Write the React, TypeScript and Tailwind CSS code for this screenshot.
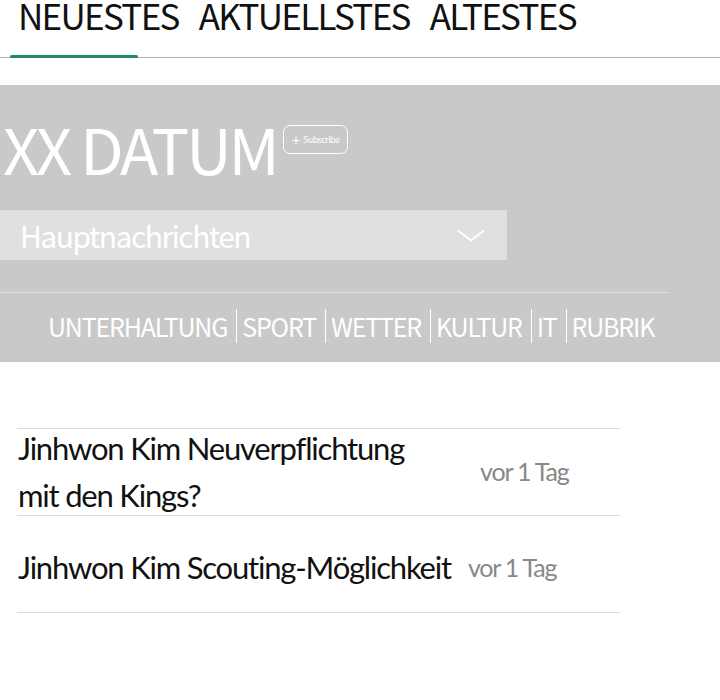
import React from 'react';

const tabs = ['NEUESTES', 'AKTUELLSTES', 'ALTESTES'];
const categories = ['UNTERHALTUNG', 'SPORT', 'WETTER', 'KULTUR', 'IT', 'RUBRIK'];

const articles = [
    { title: ['Jinhwon Kim Neuverpflichtung', 'mit den Kings?'], date: 'vor 1 Tag' },
    { title: ['Jinhwon Kim Scouting-Möglichkeit'], date: 'vor 1 Tag' },
];

const head = "font-['Noto_Sans_CJK_KR','Noto_Sans',sans-serif]";
const body = "font-['Lato','Noto_Sans',sans-serif]";

export default function App() {
    return (
        <div className="w-[720px] h-[700px] bg-white overflow-hidden">
            {/* Sort tabs */}
            <div className="relative h-[58px] border-b border-[#b5b5b5]">
                <div className={`flex gap-[20px] pl-[18px] text-[35px] leading-[30px] tracking-[-1.7px] text-[#111] ${head}`}>
                    {tabs.map((t) => (
                        <span key={t}>{t}</span>
                    ))}
                </div>
                <div className="absolute left-[10px] bottom-[-1px] w-[128px] h-[3px] rounded-full bg-[#1f8a68]" />
            </div>

            {/* Topic header */}
            <div className={`mt-[27px] h-[277px] bg-[#c9c9c9] pt-[28px] ${head}`}>
                <div className="flex items-start pl-[3px]">
                    <span className="text-[63px] leading-[70px] tracking-[-3px] text-white">XX DATUM</span>
                    <span className="mt-[12px] ml-[6px] flex items-center gap-[3px] h-[29px] px-[8px] rounded-[7px] border-[1.5px] border-white text-white">
                        <span className="text-[15px] leading-none">+</span>
                        <span className="text-[9px] tracking-[-0.6px]">Subscribe</span>
                    </span>
                </div>

                <div className="mt-[27px] flex items-center justify-between w-[507px] h-[50px] bg-[#e0e0e0] pl-[20px] pr-[22px]">
                    <span className="text-[30px] tracking-[-1.5px] text-white">Hauptnachrichten</span>
                    <svg width="28" height="13" viewBox="0 0 28 13" fill="none" stroke="white" strokeWidth="2">
                        <path d="M1 1.5l13 10L27 1.5" />
                    </svg>
                </div>

                <div className="mt-[32px] w-[670px] border-t border-[#dedede]" />

                <div className="flex items-center pl-[48px] mt-[16px] text-[25px] leading-[34px] tracking-[-1.2px] text-white">
                    {categories.map((c, i) => (
                        <span
                            key={c}
                            className={`${i > 0 ? 'border-l border-white pl-[5px]' : ''} ${i < categories.length - 1 ? 'pr-[9px]' : ''}`}
                        >
                            {c}
                        </span>
                    ))}
                </div>
            </div>

            {/* Article list */}
            <div className={`mt-[66px] ml-[17px] w-[603px] border-t border-[#dcdcdc] ${body}`}>
                {articles.map((a, i) => (
                    <div
                        key={i}
                        className={`flex items-center border-b border-[#dcdcdc] ${i === 0 ? 'h-[87px]' : 'h-[97px] pt-[7px]'}`}
                    >
                        <div className="text-[31px] leading-[47px] tracking-[-1.2px] text-[#111] pl-[1px]">
                            {a.title.map((l) => (
                                <div key={l}>{l}</div>
                            ))}
                        </div>
                        <span className={`text-[25px] tracking-[-1.2px] text-[#888] ${i === 0 ? 'ml-[76px]' : 'ml-[17px]'}`}>
                            {a.date}
                        </span>
                    </div>
                ))}
            </div>
        </div>
    );
}
